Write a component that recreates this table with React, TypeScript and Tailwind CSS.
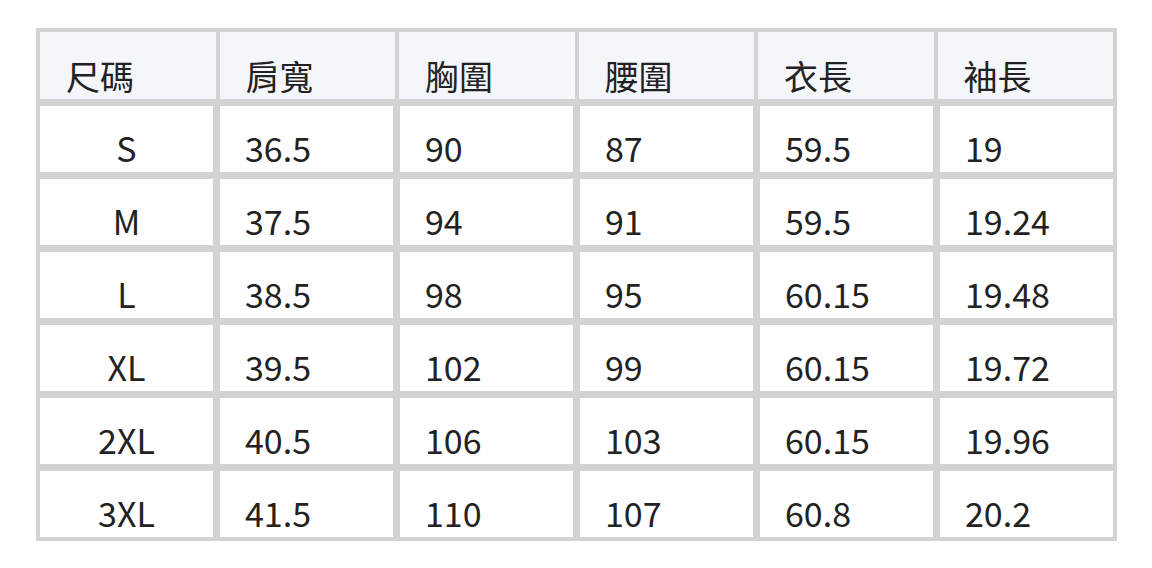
import React from "react";

const headers = ["尺碼", "肩寬", "胸圍", "腰圍", "衣長", "袖長"];
const rows = [
  ["S", "36.5", "90", "87", "59.5", "19"],
  ["M", "37.5", "94", "91", "59.5", "19.24"],
  ["L", "38.5", "98", "95", "60.15", "19.48"],
  ["XL", "39.5", "102", "99", "60.15", "19.72"],
  ["2XL", "40.5", "106", "103", "60.15", "19.96"],
  ["3XL", "41.5", "110", "107", "60.8", "20.2"],
];

export default function App() {
  return (
    <div
      className="w-[1152px] h-[568px] bg-white pt-[28px] pl-[36px]"
      style={{ fontFamily: '"Noto Sans CJK TC", "Noto Sans", sans-serif' }}
    >
      <div className="w-[1081px] bg-[#d3d3d3] p-[4px] flex flex-col gap-[7px] text-[34px] leading-[40px] text-[#222222]">
        <div className="grid grid-cols-6 gap-[4px] h-[67px]">
          {headers.map((h) => (
            <div key={h} className="bg-[#f5f6fa] flex items-end pl-[26px] pb-[3px]">
              {h}
            </div>
          ))}
        </div>
        {rows.map((r) => (
          <div key={r[0]} className="grid grid-cols-6 gap-[7px] h-[66px]">
            {r.map((c, i) => (
              <div
                key={i}
                className={
                  i === 0
                    ? "bg-white flex items-end justify-center pb-[4px]"
                    : "bg-white flex items-end pl-[25px] pb-[4px]"
                }
              >
                {c}
              </div>
            ))}
          </div>
        ))}
      </div>
    </div>
  );
}
